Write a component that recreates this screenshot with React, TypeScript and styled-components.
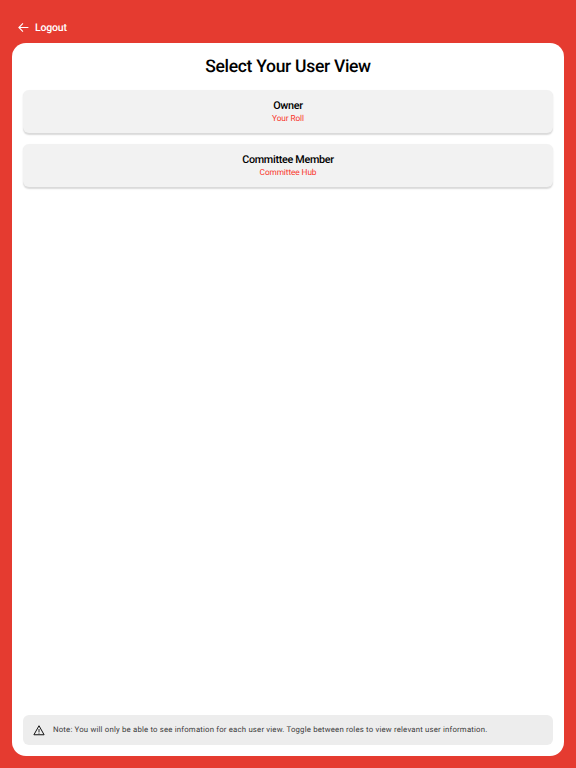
import React from "react";
import styled, { createGlobalStyle } from "styled-components";

const Global = createGlobalStyle`
  html, body { margin: 0; padding: 0; height: 100%; }
  body {
    font-family: Roboto, "Liberation Sans", sans-serif;
    background: #e53b30;
    text-rendering: geometricPrecision;
  }
`;

const Page = styled.div`
  width: 576px;
  height: 768px;
  box-sizing: border-box;
  background: #e53b30;
  padding: 0 12px 12px;
  display: flex;
  flex-direction: column;
  overflow: hidden;
`;

const Header = styled.button`
  height: 43px;
  flex: none;
  box-sizing: border-box;
  padding: 11px 0 0 4.5px;
  display: flex;
  align-items: center;
  gap: 5.5px;
  background: none;
  border: 0;
  color: #fff;
  font: 500 10.5px Roboto, sans-serif;
  letter-spacing: -0.2px;
  text-rendering: geometricPrecision;
  width: fit-content;
`;

const Card = styled.main`
  flex: 1;
  background: #fff;
  border-radius: 14px;
  padding: 11px;
  display: flex;
  flex-direction: column;
`;

const Title = styled.h1`
  margin: 0 0 10px;
  padding-top: 1px;
  text-align: center;
  font: 500 17.5px/25px Roboto, sans-serif;
  letter-spacing: -0.3px;
  color: #000;
`;

const Options = styled.div`
  display: flex;
  flex-direction: column;
  gap: 11px;
  flex: 1;
`;

const Option = styled.button`
  height: 43px;
  border: 0;
  border-radius: 6px;
  background: #f2f2f2;
  box-shadow: 0 1.5px 1.5px rgba(0, 0, 0, 0.15);
  display: flex;
  flex-direction: column;
  align-items: center;
  justify-content: center;
  gap: 0;
  padding: 0 0 1px;
  text-rendering: geometricPrecision;
`;

const OptionName = styled.span`
  font: 500 10.8px/16px Roboto, sans-serif;
  letter-spacing: -0.3px;
  color: #000;
`;

const OptionSub = styled.span`
  font: 400 8.3px/11px Roboto, sans-serif;
  letter-spacing: -0.1px;
  color: #f9372c;
`;

const Note = styled.div`
  height: 30px;
  flex: none;
  border-radius: 6px;
  background: #ededed;
  display: flex;
  align-items: center;
  gap: 8.5px;
  padding-left: 9.5px;
`;

const NoteText = styled.span`
  font: 400 7.8px/12px Roboto, sans-serif;
  letter-spacing: 0.18px;
  color: #3c3c3c;
`;

export default function App() {
  return (
    <Page>
      <Global />
      <Header>
        <svg width="13" height="13" viewBox="0 0 24 24" fill="none" stroke="#fff" strokeWidth="2">
          <path d="M21 12H4M11 4.5 3.5 12l7.5 7.5" />
        </svg>
        Logout
      </Header>
      <Card>
        <Title>Select Your User View</Title>
        <Options>
          <Option>
            <OptionName>Owner</OptionName>
            <OptionSub>Your Roll</OptionSub>
          </Option>
          <Option>
            <OptionName>Committee Member</OptionName>
            <OptionSub>Committee Hub</OptionSub>
          </Option>
        </Options>
        <Note>
          <svg width="12" height="12" viewBox="0 0 24 24" fill="none" stroke="#111" strokeWidth="2">
            <path d="M12 3.5 1.8 21.5h20.4L12 3.5Z" strokeLinejoin="miter" />
            <path d="M12 10v6M12 17.2v2" strokeWidth="1.8" />
          </svg>
          <NoteText>Note: You will only be able to see infomation for each user view. Toggle between roles to view relevant user information.</NoteText>
        </Note>
      </Card>
    </Page>
  );
}
